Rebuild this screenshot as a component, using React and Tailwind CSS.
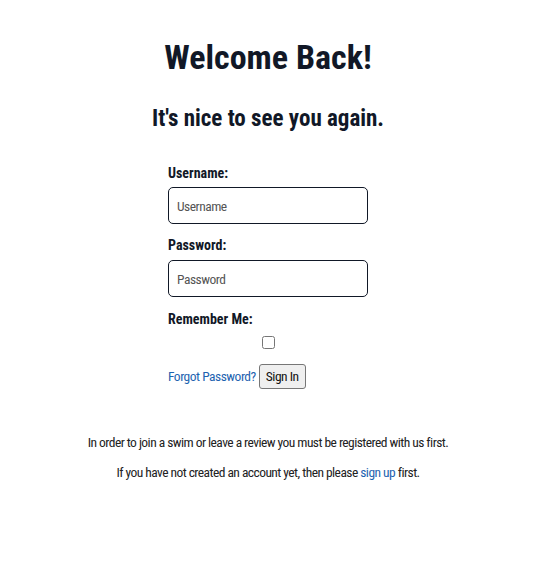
export default function App() {
  return (
    <div className="min-h-screen bg-white text-[#111827] flex flex-col items-center pr-[19px] font-['Roboto_Condensed',Roboto,sans-serif] font-stretch-condensed">
      <h1 className="mt-[34px] text-[34px] leading-[46px] font-bold">Welcome Back!</h1>
      <h2 className="mt-[24px] text-[23px] leading-[30px] font-bold">It's nice to see you again.</h2>

      <form className="mt-[30px] w-[200px] flex flex-col" onSubmit={(e) => e.preventDefault()}>
        <label className="text-[14px] font-bold leading-[18px]">Username:</label>
        <input
          type="text"
          placeholder="Username"
          className="mt-[5px] h-[37px] w-[200px] border border-[#111827] rounded-[5px] px-2 text-[13.5px] tracking-[-0.5px] placeholder:text-[#555]"
        />
        <label className="mt-[12px] text-[14px] font-bold leading-[18px]">Password:</label>
        <input
          type="password"
          placeholder="Password"
          className="mt-[6px] h-[37px] w-[200px] border border-[#111827] rounded-[5px] px-2 text-[13.5px] tracking-[-0.5px] placeholder:text-[#555]"
        />
        <label className="mt-[13px] text-[14px] font-bold leading-[18px]">Remember Me:</label>
        <div className="mt-[8px] flex justify-center">
          <input type="checkbox" className="w-[13px] h-[13px]" />
        </div>
        <div className="mt-[15px] flex items-center gap-[3px]">
          <a href="#" className="text-[13.5px] tracking-[-0.5px] text-[#1e63b0]">Forgot Password?</a>
          <button
            type="submit"
            className="h-[25px] px-[6px] text-[13.5px] tracking-[-0.5px] text-[#111] bg-[#efefef] border border-[#767676] rounded-[3px]"
          >
            Sign In
          </button>
        </div>
      </form>

      <p className="mt-[44px] text-[13.5px] tracking-[-0.55px] leading-[18px] text-[#222]">
        In order to join a swim or leave a review you must be registered with us first.
      </p>
      <p className="mt-[12px] text-[13.5px] tracking-[-0.55px] leading-[18px] text-[#222]">
        If you have not created an account yet, then please{' '}
        <a href="#" className="text-[#1e63b0]">sign up</a> first.
      </p>
    </div>
  );
}
